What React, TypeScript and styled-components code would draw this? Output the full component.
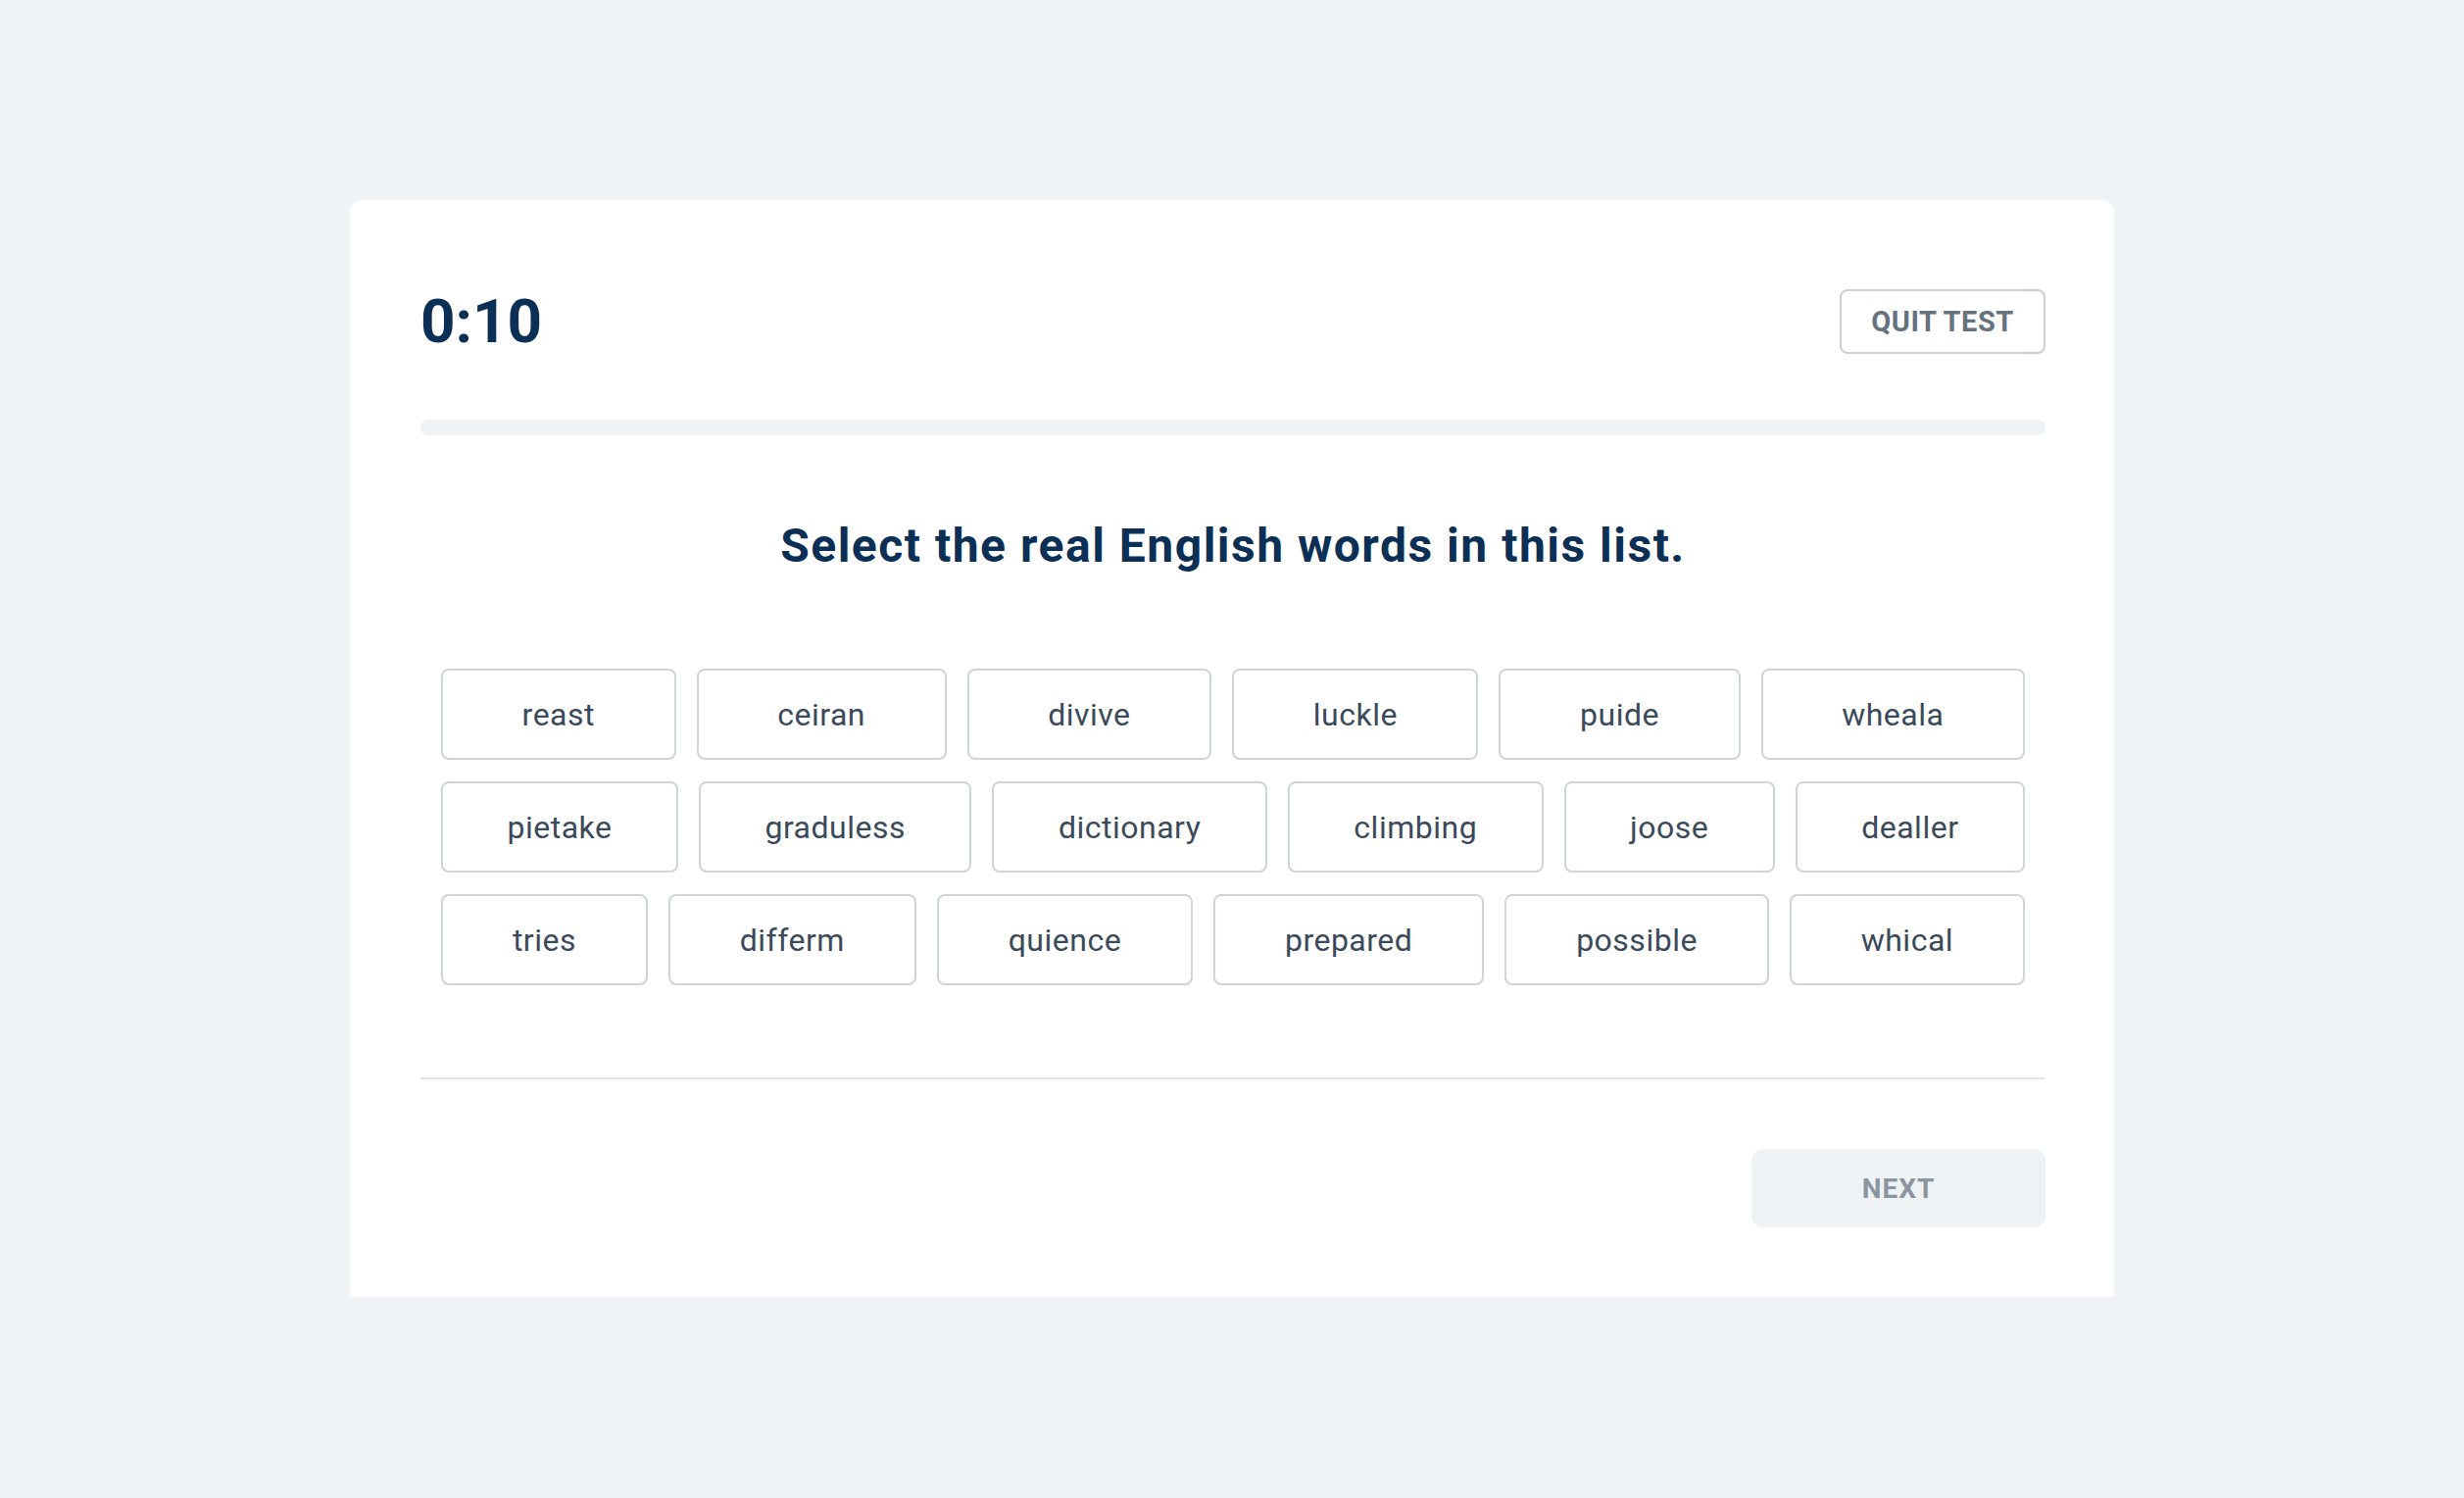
import styled, { createGlobalStyle } from "styled-components";

const GlobalStyle = createGlobalStyle`
  html, body {
    margin: 0;
    padding: 0;
    background: #eff3f6;
    font-family: Roboto, "Liberation Sans", sans-serif;
  }
`;

const rows = [
  ["reast", "ceiran", "divive", "luckle", "puide", "wheala"],
  ["pietake", "graduless", "dictionary", "climbing", "joose", "dealler"],
  ["tries", "differm", "quience", "prepared", "possible", "whical"],
];

export default function App() {
  return (
    <>
      <GlobalStyle />
      <Page>
        <Card>
          <Header>
            <Timer>0:10</Timer>
            <QuitButton>QUIT TEST</QuitButton>
          </Header>
          <Progress />
          <Question>Select the real English words in this list.</Question>
          <WordGrid>
            {rows.map((row, i) => (
              <WordRow key={i}>
                {row.map((word) => (
                  <WordChip key={word}>{word}</WordChip>
                ))}
              </WordRow>
            ))}
          </WordGrid>
          <Divider />
          <Footer>
            <NextButton disabled>NEXT</NextButton>
          </Footer>
        </Card>
      </Page>
    </>
  );
}

const Page = styled.div`
  min-height: 1528px;
  display: flex;
  justify-content: center;
  align-items: flex-start;
  padding-top: 204px;
  box-sizing: border-box;
`;

const Card = styled.div`
  width: 1800px;
  box-sizing: border-box;
  background: #ffffff;
  border-radius: 12px 12px 0 0;
  padding: 91px 70px 71px 72px;
  display: flex;
  flex-direction: column;
`;

const Header = styled.div`
  height: 66px;
  display: flex;
  align-items: center;
  justify-content: space-between;
`;

const Timer = styled.div`
  font-size: 62px;
  font-weight: 700;
  color: #0b2f55;
  line-height: 1;
`;

const QuitButton = styled.button`
  width: 210px;
  height: 66px;
  box-sizing: border-box;
  border: 2px solid #cbd0d5;
  border-radius: 8px;
  background: #ffffff;
  color: #66727e;
  font-family: inherit;
  font-size: 29px;
  font-weight: 700;
  letter-spacing: 0.5px;
  cursor: pointer;
`;

const Progress = styled.div`
  margin-top: 67px;
  height: 16px;
  border-radius: 8px;
  background: #eff2f5;
`;

const Question = styled.h1`
  margin: 84px 0 0;
  font-size: 48px;
  line-height: 58px;
  font-weight: 700;
  letter-spacing: 1.5px;
  color: #0b2f55;
  text-align: center;
`;

const WordGrid = styled.div`
  margin-top: 96px;
  padding: 0 21px;
  display: flex;
  flex-direction: column;
  gap: 22px;
`;

const WordRow = styled.div`
  display: flex;
  gap: 21px;
`;

const WordChip = styled.button`
  flex: 1 1 auto;
  height: 93px;
  padding: 0 40px;
  box-sizing: border-box;
  border: 2px solid #cfd4d9;
  border-radius: 8px;
  background: #ffffff;
  color: #3b4a5b;
  font-family: inherit;
  font-size: 32px;
  font-weight: 400;
  letter-spacing: 0.5px;
  cursor: pointer;
`;

const Divider = styled.div`
  margin-top: 94px;
  height: 2px;
  background: #e1e5e9;
`;

const Footer = styled.div`
  margin-top: 71px;
  display: flex;
  justify-content: flex-end;
`;

const NextButton = styled.button`
  width: 300px;
  height: 80px;
  border: none;
  border-radius: 12px;
  background: #eff2f5;
  color: #8b959f;
  font-family: inherit;
  font-size: 28px;
  font-weight: 700;
  letter-spacing: 1px;
`;
